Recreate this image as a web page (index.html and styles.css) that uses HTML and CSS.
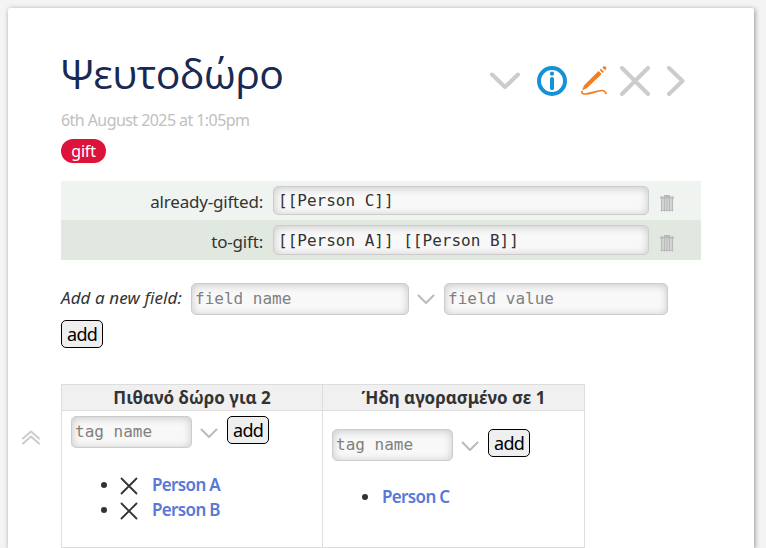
FILE: index.html
```html
<!DOCTYPE html>
<html lang="el">
<head>
  <meta charset="UTF-8" />
  <title>Ψευτοδώρο</title>
  <link rel="stylesheet" href="styles.css">
</head>
<body>

  <div class="tiddler">
    <div class="titlebar">
      <h1 class="title">Ψευτοδώρο</h1>
      <div class="controls">
        <svg class="more" width="30" height="30" viewBox="0 0 30 30"><path d="M2 8.500L15 21L28 8.500" /></svg>
        <svg class="info" width="30" height="30" viewBox="0 0 30 30">
          <circle cx="15" cy="15" r="13" />
          <circle class="dot" cx="15" cy="7.700" r="2.100" />
          <path d="M15 13V22.300" />
        </svg>
        <svg class="edit" width="26" height="30" viewBox="0 0 26 30">
          <path class="pen" d="M1 24.500L3 19.500L17.500 5L20.700 8L6 22Z M18.600 4L19.900 2.700L23 5.700L21.700 7Z M21.200 1.500L23.500 0L25.500 1.500L24.500 4.500Z" />
          <path class="line" d="M1 25.500C0.500 27 2 28 4 28C11 28 15 24.500 21 24.500C24 24.500 24.500 26 25 27.500" />
        </svg>
        <svg class="close" width="30" height="30" viewBox="0 0 30 30"><path d="M2 2L28 28M28 2L2 28" /></svg>
        <svg class="next" width="18" height="30" viewBox="0 0 18 30"><path d="M2 2L15.500 15L2 28" /></svg>
      </div>
    </div>

    <div class="subtitle">6th August 2025 at 1:05pm</div>
    <span class="tag">gift</span>

    <div class="fields">
      <div class="field">
        <label>already-gifted:</label>
        <input type="text" value="[[Person C]]" />
        <svg class="trash" width="14" height="17" viewBox="0 0 14 17"><path class="bin" d="M1 3H13V16H1Z" /><path class="lid" d="M0 1.500H4V0H10V1.500H14V3.500H0Z" /><path class="bars" d="M1.500 3V16M4.500 3V16M7 3V16M9.500 3V16M12.500 3V16M1 15.500H13" /></svg>
      </div>
      <div class="field even">
        <label>to-gift:</label>
        <input type="text" value="[[Person A]] [[Person B]]" />
        <svg class="trash" width="14" height="17" viewBox="0 0 14 17"><path class="bin" d="M1 3H13V16H1Z" /><path class="lid" d="M0 1.500H4V0H10V1.500H14V3.500H0Z" /><path class="bars" d="M1.500 3V16M4.500 3V16M7 3V16M9.500 3V16M12.500 3V16M1 15.500H13" /></svg>
      </div>
    </div>

    <div class="newfield">
      <em>Add a new field:</em>
      <input class="name" type="text" placeholder="field name" />
      <svg class="drop" width="18" height="11" viewBox="0 0 18 11"><path d="M1.500 1.500L9 9L16.500 1.500" /></svg>
      <input class="value" type="text" placeholder="field value" />
    </div>
    <button class="addfield">add</button>

    <div class="lists">
      <svg class="top" width="18" height="15" viewBox="0 0 18 15"><path d="M1 8.500L9 1.500L17 8.500M1 13.500L9 6.500L17 13.500" /></svg>
      <table>
        <tr>
          <th class="possible">Πιθανό δώρο για 2</th>
          <th>Ήδη αγορασμένο σε 1</th>
        </tr>
        <tr>
          <td>
            <div class="addtag">
              <input type="text" placeholder="tag name" />
              <svg class="drop" width="18" height="11" viewBox="0 0 18 11"><path d="M1.500 1.500L9 9L16.500 1.500" /></svg>
              <button>add</button>
            </div>
            <ul>
              <li><svg class="remove" width="18" height="18" viewBox="0 0 18 18"><path d="M1.500 1.500L16.500 16.500M16.500 1.500L1.500 16.500" /></svg><a>Person A</a></li>
              <li><svg class="remove" width="18" height="18" viewBox="0 0 18 18"><path d="M1.500 1.500L16.500 16.500M16.500 1.500L1.500 16.500" /></svg><a>Person B</a></li>
            </ul>
          </td>
          <td class="bought">
            <div class="addtag">
              <input type="text" placeholder="tag name" />
              <svg class="drop" width="18" height="11" viewBox="0 0 18 11"><path d="M1.500 1.500L9 9L16.500 1.500" /></svg>
              <button>add</button>
            </div>
            <ul>
              <li><a>Person C</a></li>
            </ul>
          </td>
        </tr>
      </table>
    </div>
  </div>

</body>
</html>
```

FILE: styles.css
```css
* {
  box-sizing: border-box;
}
body {
  margin: 0;
  padding: 8px 12px 0 8px;
  background: #f4f4f4;
  color: #333;
  font-family: "Noto Sans", "Open Sans", sans-serif;
  font-size: 17px;
}
svg {
  display: block;
  flex: none;
  fill: none;
  stroke: #ccc;
  stroke-linecap: round;
  stroke-linejoin: round;
}
.tiddler {
  height: 540px;
  padding: 42px 53px 0;
  background: #fff;
  border-radius: 2px 2px 0 0;
  box-shadow: 1px 1px 5px rgba(0, 0, 0, 0.4);
}
.titlebar {
  display: flex;
  justify-content: space-between;
  height: 58px;
}
.title {
  margin: 0;
  color: #182955;
  font-family: "Open Sans", sans-serif;
  font-size: 41px;
  font-weight: 400;
  line-height: 46px;
  letter-spacing: -0.5px;
}
.controls {
  display: flex;
  margin: 16px 16px 0 0;
  stroke-width: 4;
}
.controls svg {
  stroke-width: 4;
}
.info {
  margin-left: 17px;
  stroke: #1591d8;
}
.info .dot {
  fill: #1591d8;
  stroke: none;
}
.edit {
  margin-left: 14px;
}
.edit .pen {
  fill: #f57c1f;
  stroke: none;
}
.edit .line {
  stroke: #f57c1f;
  stroke-width: 1.7;
}
.close {
  margin-left: 13px;
}
.next {
  margin-left: 17px;
}
.subtitle {
  height: 31px;
  color: #c0c0c0;
  font-size: 16px;
  line-height: 25px;
  letter-spacing: -0.57px;
}
.tag {
  display: block;
  width: 45px;
  height: 24px;
  border-radius: 12px;
  background: #dc143c;
  color: #fff;
  font-size: 16px;
  line-height: 24px;
  letter-spacing: -0.2px;
  text-align: center;
}

input {
  height: 32px;
  padding: 0 4px 2px;
  border: 1px solid #ccc;
  border-radius: 5px;
  background: #f8f8f8;
  box-shadow: inset 0 1px 8px rgba(0, 0, 0, 0.2);
  color: #333;
  font-family: "DejaVu Sans Mono", monospace;
  font-size: 16px;
}
input::placeholder {
  color: #808080;
}
button {
  width: 42px;
  height: 28px;
  padding: 0;
  border: 1px solid #000;
  border-radius: 5px;
  background: #efefef;
  color: #000;
  font-family: "Noto Sans", sans-serif;
  font-size: 18px;
  line-height: 26px;
  letter-spacing: -0.8px;
}

.fields {
  margin-top: 18px;
}
.field {
  display: flex;
  align-items: center;
  height: 39px;
  background: #eff4f0;
}
.field label {
  width: 202px;
  padding-top: 1px;
  text-align: right;
  letter-spacing: -0.2px;
}
.field input {
  width: 376px;
  height: 29px;
  padding: 0 4px;
}
.field label + input {
  margin-left: 10px;
}
.field.even {
  height: 40px;
  background: #e0e8e0;
}
.field.even label {
  padding-top: 3px;
}
.field.even input {
  height: 30px;
}
.trash {
  margin: 5px 0 0 11px;
  stroke: none;
}
.even .trash {
  margin-top: 7px;
}
.trash .bin {
  fill: #d4d4d4;
}
.trash .lid {
  fill: #b9b9b9;
}
.trash .bars {
  stroke: #b9b9b9;
  stroke-width: 1.1;
}

.newfield {
  display: flex;
  align-items: center;
  margin-top: 23px;
}
.newfield em {
  width: 130px;
  padding-bottom: 3px;
  letter-spacing: 0.1px;
  white-space: nowrap;
}
.newfield .name {
  width: 218px;
}
.newfield .value {
  width: 224px;
}
.newfield input, .addtag input {
  padding-left: 3px;
}
.drop {
  margin: 0 9px 0 8px;
  stroke: #bbb;
  stroke-width: 2;
}
.addfield {
  display: block;
  margin-top: 5px;
}

.lists {
  position: relative;
  margin-top: 36px;
}
.top {
  position: absolute;
  left: -39px;
  top: 46px;
  stroke-width: 2;
}
table {
  width: 524px;
  border-collapse: collapse;
  table-layout: fixed;
}
th, td {
  padding: 0;
  border: 1px solid #ddd;
}
th {
  height: 26px;
  background: #f0f0f0;
  line-height: 25px;
}
.possible {
  width: 261px;
}
td {
  height: 137px;
  padding: 5px 9px 0;
  vertical-align: top;
}
.addtag {
  display: flex;
}
.addtag input {
  width: 121px;
}
.addtag .drop {
  margin-top: 12px;
}
ul {
  margin: 24px 0 0;
  padding-left: 49px;
}
li {
  height: 25px;
  padding-left: 1px;
  line-height: 25px;
}
li a {
  color: #5778d8;
  font-weight: 600;
  letter-spacing: -0.65px;
}
.remove {
  display: inline-block;
  margin: 0 14px 0 -1px;
  vertical-align: -4px;
  stroke: #333;
  stroke-width: 1.8;
}
.bought {
  padding-top: 18px;
}
.bought ul {
  margin-top: 23px;
}
```
